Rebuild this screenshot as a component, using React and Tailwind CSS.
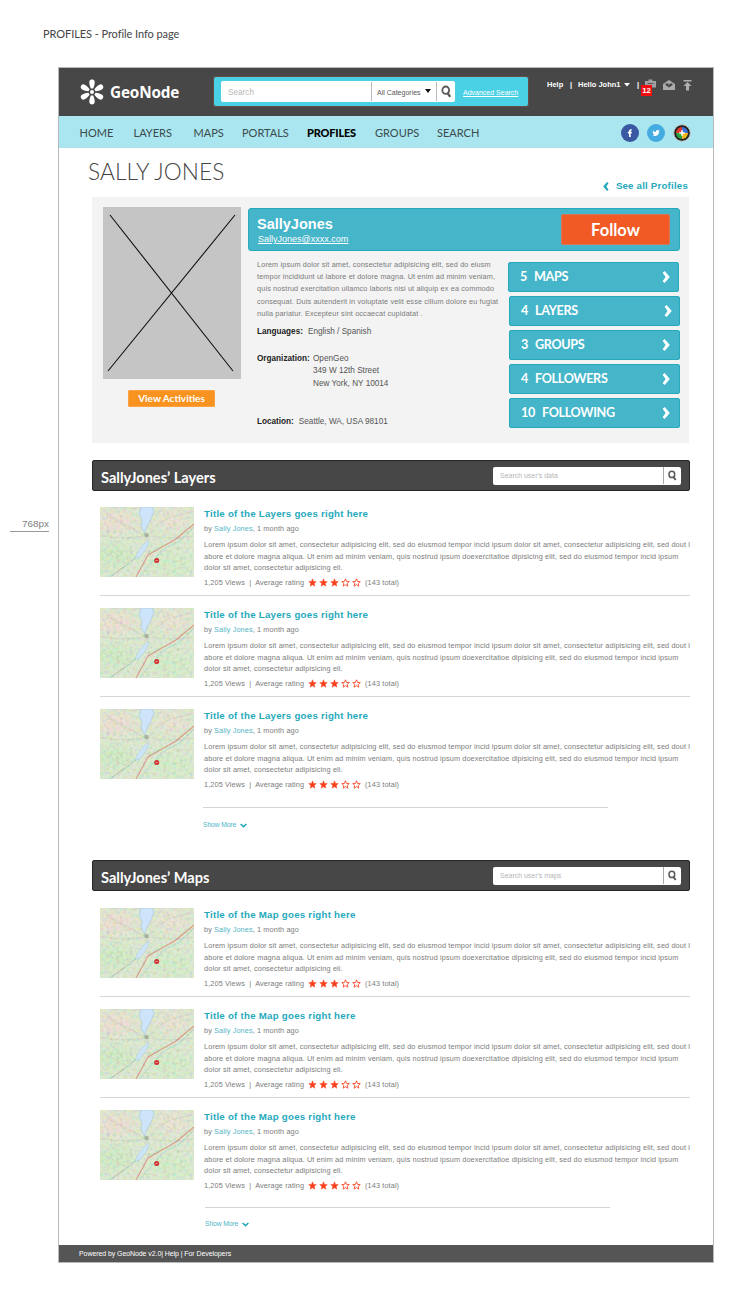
import React from "react";

const arial = "font-['Liberation_Sans',Arial,sans-serif]";

function Logo() {
  return (
    <svg width="26" height="26" viewBox="-13 -13 26 26" className="shrink-0">
      {[0, 60, 120, 180, 240, 300].map((a) => (
        <path key={a} transform={`rotate(${a})`} d="M-1.2 -3.4 C-2.2 -6 -3 -8.5 -2.6 -10.6 C-2.1 -13.2 2.1 -13.2 2.6 -10.6 C3 -8.5 2.2 -6 1.2 -3.4 Z" fill="#fff" />
      ))}
      <circle r="2" fill="#fff" />
    </svg>
  );
}

function Search({ size = 12 }) {
  return (
    <svg width={size} height={size} viewBox="0 0 12 12" fill="none" stroke="#5a5a5a">
      <ellipse cx="5.3" cy="4.8" rx="3.1" ry="3.4" strokeWidth="1.7" />
      <path d="M7 7.4 L9.4 10.9" strokeWidth="2.1" />
    </svg>
  );
}

function Chevron({ className, color = "#fff", w = 8, h = 12 }) {
  return (
    <svg width={w} height={h} viewBox="0 0 8 12" className={className}>
      <path d="M0.6 1.8 L2.6 0 L7.8 6 L2.6 12 L0.6 10.2 L3.6 6 Z" fill={color} />
    </svg>
  );
}

function Star({ filled }) {
  return (
    <svg width="9" height="9" viewBox="0 0 10 10" className="shrink-0">
      <path
        d="M5 0.9 L6.15 3.8 L9.2 4 L6.9 6 L7.6 9.1 L5 7.4 L2.4 9.1 L3.1 6 L0.8 4 L3.85 3.8 Z"
        fill={filled ? "#f9401c" : "#fff"}
        stroke="#f9401c"
        strokeWidth={filled ? "0.5" : "0.95"}
      />
    </svg>
  );
}

function MapThumb() {
  return (
    <svg width="94" height="70" viewBox="0 0 94 70" className="block shrink-0">
      <defs>
        <filter id="terrain" x="0" y="0" width="100%" height="100%">
          <feTurbulence type="fractalNoise" baseFrequency="0.3" numOctaves="4" seed="8" />
          <feColorMatrix values="1.9 0 0 0 -0.12  0 1.5 0 0 0.1  0 0 1.7 0 -0.1  0 0 0 0 1" />
        </filter>
        <filter id="soft" x="-50%" y="-50%" width="200%" height="200%"><feGaussianBlur stdDeviation="4" /></filter>
      </defs>
      <rect width="94" height="70" fill="#d5e4c9" />
      <g filter="url(#soft)">
        <ellipse cx="16" cy="15" rx="20" ry="11" fill="#e8d8ca" />
        <ellipse cx="72" cy="13" rx="16" ry="10" fill="#e6dccb" />
        <ellipse cx="14" cy="48" rx="18" ry="12" fill="#c7e6ba" />
        <ellipse cx="70" cy="56" rx="22" ry="12" fill="#cce8c0" />
      </g>
      <g fill="none" stroke="#a9b59c" strokeWidth="0.5" opacity="0.7">
        <path d="M0 29 L20 31 L46 29 L70 31 L94 29" />
        <path d="M46 29 L30 20 L8 9" />
        <path d="M46 29 L60 17 L70 10 L92 5" />
        <path d="M46 29 L50 48" />
        <path d="M0 43 L14 50 L24 56 L34 52" />
      </g>
      <path d="M94 20 L78 35 L62 43 L54 53 L46 62 L40 70" fill="none" stroke="#9ccfc4" strokeWidth="0.9" />
      <path d="M36 51 L28 57 L18 64 L10 70" fill="none" stroke="#a0b9a4" strokeWidth="1" />
      <path d="M94 17 L76 32 L62 40 L48 48 L42 59 L36 70" fill="none" stroke="#d1806c" strokeWidth="1.2" />
      <rect width="94" height="70" filter="url(#terrain)" opacity="0.27" />
      <path d="M41 0 L39 7 L42 13 L41 19 L44.5 26 L47 19 L51 12 L54 4 L52 0 Z" fill="#cde4fa" stroke="#9fc3d9" strokeWidth="0.5" />
      <path d="M48 33 L43 38 L38 44 L35 51 L40 50 L46 42 L49 35 Z" fill="#cde4f6" stroke="#9fc3d9" strokeWidth="0.4" />
      <circle cx="46.5" cy="28" r="2.2" fill="#8f9086" opacity="0.6" />
      <circle cx="56.7" cy="53.5" r="2.5" fill="#cf2f31" />
      <path d="M55.5 53.5 H57.9" stroke="#f0a49b" strokeWidth="0.8" />
    </svg>
  );
}

function Item({ title, last }) {
  return (
    <article className={`ml-2 flex h-[101px] w-[590px] border-b ${last ? "border-transparent" : "border-[#d6d6d6]"}`}>
      <div className="pt-3"><MapThumb /></div>
      <div className={`ml-[10px] w-[486px] shrink-0 pt-3 ${arial} text-[7.3px] text-[#7c7c7c] whitespace-nowrap`}>
        <h3 className="h-[14px] text-[9.7px] leading-[14px] font-bold tracking-[0.25px] text-[#26a9bb]">{title}</h3>
        <p className="mt-[2px] h-[12px] leading-[12px] tracking-[0.12px]">by <span className="text-[#55b5c7]">Sally Jones</span>, 1 month ago</p>
        <div className="mt-[4px] leading-[11.6px] tracking-[0.13px]">
          <p>Lorem ipsum dolor sit amet, consectetur adipisicing elit, sed do eiusmod tempor incid ipsum dolor sit amet, consectetur adipisicing elit, sed dout l</p>
          <p>abore et dolore magna aliqua. Ut enim ad minim veniam, quis nostrud ipsum doexercitatioe dipisicing elit, sed do eiusmod tempor incid ipsum</p>
          <p>dolor sit amet, consectetur adipisicing eli.</p>
        </div>
        <div className="mt-[3px] flex h-[12px] items-center leading-[12px] tracking-[0.12px]">
          <span className="w-[104px] whitespace-pre">1,205 Views  |  Average rating</span>
          <span className="flex w-[57px] gap-[2px]">
            {[1, 1, 1, 0, 0].map((f, i) => <Star key={i} filled={f} />)}
          </span>
          <span>(143 total)</span>
        </div>
      </div>
    </article>
  );
}

function Section({ heading, placeholder, item, itemsClass, showMoreClass, linkClass }) {
  return (
    <section>
      <div className="ml-[33px] flex h-[31px] w-[598px] items-center justify-between rounded-[2px] border border-[#262626] bg-[#474747] pr-2 pl-2">
        <h2 className="pt-[4px] text-[14.6px] font-bold text-white">{heading}</h2>
        <div className={`flex h-[18px] w-[188px] items-center rounded-[2px] bg-white ${arial}`}>
          <span className="flex-1 pt-px pl-[7px] text-[7px] tracking-[-0.02px] text-[#b5b5b5]">{placeholder}</span>
          <span className="flex h-[17px] w-[18px] items-center justify-center border-l border-[#aaa]"><Search size={11} /></span>
        </div>
      </div>
      <div className={`ml-[33px] ${itemsClass}`}>
        <Item title={item} />
        <Item title={item} />
        <Item title={item} last />
      </div>
      <div className={showMoreClass}>
        <div className="h-px w-[405px] bg-[#d3d3d3]" />
        <div className={`flex items-center gap-[4px] text-[6.8px] tracking-[-0.15px] text-[#4db4c6] ${arial} ${linkClass}`}>
          Show More
          <svg width="7" height="5" viewBox="0 0 7 5"><path d="M0.6 1 L3.5 3.7 L6.4 1" fill="none" stroke="#26a9bb" strokeWidth="1.6" /></svg>
        </div>
      </div>
    </section>
  );
}

function Stat({ n, label, className = "ml-px pr-[9px]" }) {
  return (
    <div className={`flex h-[30px] items-center rounded-[2px] border border-[#26a9bd] bg-[#45b5c9] pl-[11px] text-[12.6px] font-bold tracking-[-0.33px] text-white ${className}`}>
      <span className="flex flex-1 gap-[7px]"><span>{n}</span><span>{label}</span></span>
      <Chevron />
    </div>
  );
}

export default function App() {
  return (
    <div className="flex h-[1294px] w-[750px] flex-col overflow-hidden bg-white font-['Lato',sans-serif]">
      <div className="h-[67px] shrink-0 pt-[27px] pl-[43px] text-[11px] leading-[14px] tracking-[-0.07px] text-[#444]">PROFILES - Profile Info page</div>
      <div className="flex shrink-0">
        <aside className={`w-[58px] shrink-0 pt-[450px] pl-[10px] ${arial} text-[#808080]`}>
          <div className="w-[39px] border-b border-[#999] pb-[1px] text-right text-[9.9px] leading-[13px]">768px</div>
        </aside>
        <main className="flex h-[1196px] w-[656px] flex-col border border-[#b9b9b9]">
          <header className="flex h-[48px] shrink-0 bg-[#474747]">
            <div className="flex w-[154px] items-center gap-[5px] pl-[20px]">
              <Logo />
              <span className="text-[15.3px] font-bold tracking-[-0.15px] text-white font-['Open_Sans',sans-serif]">GeoNode</span>
            </div>
            <div className={`mt-[8px] flex h-[31px] w-[316px] items-center rounded-[3px] border border-[#6a4c46] bg-[#4bd1e5] pl-[7px] ${arial}`}>
              <div className="flex h-[21px] w-[234px] items-center rounded-[2px] bg-white">
                <span className="flex-1 pt-[3px] pl-[7px] text-[8.2px] text-[#b7b7b7]">Search</span>
                <span className="flex h-[19px] w-[65px] items-center gap-[4px] border-l border-[#bbb] pl-[5px] text-[7px] whitespace-nowrap text-[#555]"><span className="pt-[3px]">All Categories</span>
                  <svg width="6" height="4" viewBox="0 0 6 4" className="mb-[1px]"><path d="M0 0 H6 L3 4 Z" fill="#111" /></svg>
                </span>
                <span className="flex h-[19px] w-[19px] items-center justify-center border-l border-[#bbb]"><Search size={13} /></span>
              </div>
              <span className="ml-[8px] pt-[3px] text-[7px] whitespace-nowrap text-white underline">Advanced Search</span>
            </div>
            <div className={`ml-[18px] flex h-[32px] items-center pt-[2px] text-[7.5px] font-bold whitespace-pre text-white ${arial}`}>
              <span className="w-[23px]">Help</span>
              <span className="w-[8px]">|</span>
              <span className="w-[46px]">Hello John1</span>
              <svg width="6" height="4" viewBox="0 0 6 4"><path d="M0 0 H6 L3 3.5 Z" fill="#fff" /></svg>
              <span className="ml-[7px] w-[6px]">|</span>
              <span className="relative h-[12px] w-[14px]">
                <svg width="13" height="11" viewBox="0 0 13 11" className="ml-[1px]"><path d="M1 2 H4.5 V0.5 H8.5 V2 H12 V8.5 H8 L6.5 10.5 L5 8.5 H1 Z" fill="#a2a2a2" /><path d="M3.5 4.5 H9.5" stroke="#555" /></svg>
                <span className="absolute top-[6px] left-[-2px] flex h-[11px] w-[11px] items-center justify-center bg-[#f20d12] pt-px text-[7.8px]">12</span>
              </span>
              <svg width="12" height="11" viewBox="0 0 12 11" className="ml-[6px]"><path d="M0 4 L6 0 L12 4 V10 H0 Z" fill="#ababab" /><path d="M2.5 3.5 H9.5 V5 L6 7.5 L2.5 5 Z" fill="#444" /><path d="M4.6 3.6 H7.4 L6 5 Z" fill="#ababab" /></svg>
              <svg width="9" height="11" viewBox="0 0 9 11" className="ml-[8px]"><path d="M0.5 0 H8.5 V1.6 H0.5 Z M4.5 2 L8.5 6 H6 V10.5 H3 V6 H0.5 Z" fill="#b0b0b0" /></svg>
            </div>
          </header>
          <nav className="flex h-[32px] shrink-0 items-center bg-[#a9e6ef] pt-[2px] text-[11px] text-[#3c4b4e]">
            <span className="ml-[20.5px] w-[54px]">HOME</span>
            <span className="w-[60px]">LAYERS</span>
            <span className="w-[48.5px]">MAPS</span>
            <span className="w-[65px]">PORTALS</span>
            <span className="w-[68px] font-black tracking-[-0.2px] text-black">PROFILES</span>
            <span className="w-[62px]">GROUPS</span>
            <span className="w-[184px]">SEARCH</span>
            <svg width="18" height="18" viewBox="0 0 18 18"><circle cx="9" cy="9" r="9" fill="#3a58a2" /><path d="M8 13 V9.5 H6.8 V7.8 H8 V6.8 Q8 4.8 10.8 5.2 V6.6 Q9.7 6.4 9.7 7.1 V7.8 H10.8 L10.6 9.5 H9.7 V13 Z" fill="#fff" /></svg>
            <svg width="18" height="18" viewBox="0 0 18 18" className="ml-[8px]"><circle cx="9" cy="9" r="9" fill="#45ace2" /><path d="M6 6.4 Q7.4 8 8.8 8 Q8.8 6 10.5 6 Q11.3 6 11.7 6.5 L12.6 6.2 L12.1 7.3 Q12 11.5 8.5 12 Q6.7 12.1 5.5 11.2 Q6.8 11.1 7.3 10.6 Q6.3 10.2 6.1 9.6 Q5.4 8 6 6.4 Z" fill="#fff" /></svg>
            <svg width="18" height="18" viewBox="0 0 18 18" className="ml-[8px]"><circle cx="9" cy="9" r="8.3" fill="#222" stroke="#c6c6c6" /><path d="M9 9 V3 A6 6 0 0 0 3 9 Z" fill="#e23b2c" /><path d="M9 9 V3 A6 6 0 0 1 15 9 Z" fill="#3b72d9" /><path d="M9 9 H3 A6 6 0 0 0 9 15 Z" fill="#2aa345" /><path d="M9 9 H15 A6 6 0 0 1 9 15 Z" fill="#f4b81c" /><path d="M9 6.2 V11.8 M6.2 9 H11.8" stroke="#fff" strokeWidth="1.6" /></svg>
          </nav>
          <div className="flex h-[49px] shrink-0 justify-between pr-[25px] pl-[29px]">
            <h1 className="pt-[9px] text-[22.7px] leading-[30px] font-light tracking-[0.08px] text-[#444]">SALLY JONES</h1>
            <div className={`flex items-center gap-[7px] pt-[28px] text-[9.7px] font-bold tracking-[0.2px] text-[#26a9bb] ${arial}`}>
              <Chevron color="#26a9bb" w={6} h={9} className="rotate-180" />See all Profiles
            </div>
          </div>
          <section className="ml-[33px] flex h-[246px] w-[597px] shrink-0 bg-[#f3f3f3]">
            <div className="ml-[10px] flex w-[139px] shrink-0 flex-col items-center pt-[10px]">
              <svg width="138" height="172" viewBox="0 0 138 172"><rect width="138" height="172" fill="#c5c5c5" /><path d="M7 8 L130 164 M132 8 L5 164" stroke="#111" strokeWidth="1.1" /></svg>
              <div className="mt-[11px] flex h-[17px] w-[87px] items-center justify-center rounded-[1px] border border-[#fca243] bg-[#f7931e] text-[10px] font-bold text-white">View Activities</div>
            </div>
            <div className="ml-[7px] w-[433px] pt-[11px]">
              <div className={`flex h-[43px] w-[432px] items-center justify-between rounded-[3px] border border-[#26a9bd] bg-[#45b5c9] pr-[9px] pl-[8px] text-white ${arial}`}>
                <div className="pt-[2px]">
                  <div className="text-[14.5px] leading-[17px] font-bold">SallyJones</div>
                  <div className="pl-[1px] text-[9px] leading-[12px] tracking-[0.01px] underline">SallyJones@xxxx.com</div>
                </div>
                <div className="flex h-[31px] w-[109px] items-center justify-center rounded-[2px] border border-[#d9755a] bg-[#f15a24] pt-px text-[16.5px] font-bold font-['Lato',sans-serif]">Follow</div>
              </div>
              <div className="flex">
                <div className={`w-[260px] shrink-0 pt-[8px] pl-[9px] text-[8.2px] whitespace-nowrap text-[#555] ${arial}`}>
                  <div className="text-[7.3px] leading-[12.2px] tracking-[0.13px] text-[#7b7b7b]">
                    <p>Lorem ipsum dolor sit amet, consectetur adipisicing elit, sed do eiusm</p>
                    <p>tempor incididunt ut labore et dolore magna. Ut enim ad minim veniam,</p>
                    <p>quis nostrud exercitation ullamco laboris nisi ut aliquip ex ea commodo</p>
                    <p>consequat. Duis autenderit in voluptate velit esse cillum dolore eu fugiat</p>
                    <p>nulla pariatur. Excepteur sint occaecat cupidatat .</p>
                  </div>
                  <p className="mt-[6px] leading-[12px]"><b className="mr-[5px] text-[#222]">Languages:</b>English / Spanish</p>
                  <div className="mt-[15px] flex leading-[12.3px]"><b className="w-[56px] text-[#222]">Organization:</b><div>OpenGeo<br />349 W 12th Street<br />New York, NY 10014</div></div>
                  <p className="mt-[26px] leading-[12px]"><b className="mr-[5px] text-[#222]">Location:</b>Seattle, WA, USA 98101</p>
                </div>
                <div className="flex w-[172px] flex-col gap-[4px] pt-[11px]">
                  <Stat n="5" label="MAPS" className="mr-px pr-[8px]" />
                  <Stat n="4" label="LAYERS" className="ml-px pr-[7px]" />
                  <Stat n="3" label="GROUPS" />
                  <Stat n="4" label="FOLLOWERS" />
                  <Stat n="10" label="FOLLOWING" />
                </div>
              </div>
            </div>
          </section>
          <div className="h-[17px] shrink-0" />
          <Section heading="SallyJones’ Layers" placeholder="Search user's data" item="Title of the Layers goes right here" itemsClass="pt-1" showMoreClass="ml-[144px] mt-[9px]" linkClass="h-[34px]" />
          <div className="h-[18px] shrink-0" />
          <Section heading="SallyJones’ Maps" placeholder="Search user's maps" item="Title of the Map goes right here" itemsClass="pt-[5px]" showMoreClass="ml-[146px] mt-[8px]" linkClass="h-[33px]" />
          <footer className={`mt-auto flex h-[17px] shrink-0 items-center bg-[#555] pt-[2px] pl-[20px] text-[7px] tracking-[-0.08px] text-white ${arial}`}>Powered by GeoNode v2.0| Help | For Developers</footer>
        </main>
      </div>
    </div>
  );
}
